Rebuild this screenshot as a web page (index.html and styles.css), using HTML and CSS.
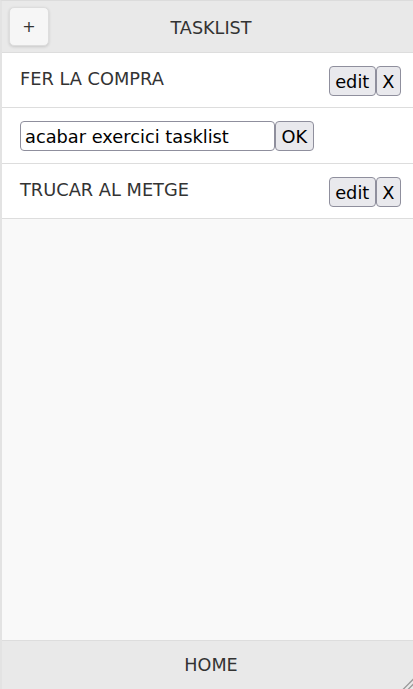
FILE: index.html
```html
<!DOCTYPE html>
<html lang="ca">
<head>
<meta charset="utf-8">
<title>Tasklist</title>
<link rel="stylesheet" href="styles.css">
</head>
<body>
<div class="app">
  <header class="bar header">
    <div class="bar-left"><button class="add-btn" type="button">+</button></div>
    <h1 class="title">TASKLIST</h1>
    <div class="bar-right"></div>
  </header>
  <ul class="tasks">
    <li class="task">
      <span class="task-text">FER LA COMPRA</span>
      <span class="actions"><button class="btn" type="button">edit</button><button class="btn" type="button">X</button></span>
    </li>
    <li class="task editing">
      <input class="task-input" type="text" value="acabar exercici tasklist"><button class="btn" type="button">OK</button>
    </li>
    <li class="task">
      <span class="task-text">TRUCAR AL METGE</span>
      <span class="actions"><button class="btn" type="button">edit</button><button class="btn" type="button">X</button></span>
    </li>
  </ul>
  <div class="content"></div>
  <footer class="bar footer">
    <h2 class="title">HOME</h2>
  </footer>
</div>
<svg class="grip" width="12" height="12" viewBox="0 0 12 12" aria-hidden="true">
  <line x1="2" y1="12.5" x2="12.5" y2="2" stroke="#9a9a9a" stroke-width="1.3"/>
  <line x1="7" y1="12.5" x2="12.5" y2="7" stroke="#9a9a9a" stroke-width="1.3"/>
</svg>
</body>
</html>
```

FILE: styles.css
```css
html, body {
  margin: 0;
  padding: 0;
  overflow: hidden;
  background: #f9f9f9;
}

body {
  font-family: "DejaVu Sans", Verdana, sans-serif;
  font-size: 17.8px;
  color: #333;
}

.app {
  box-sizing: border-box;
  width: 420px;
  height: 689px;
  border-left: 2px solid #e3e3e3;
  border-top: 1px solid #dcdcdc;
  display: flex;
  flex-direction: column;
  background: #f9f9f9;
}

.bar {
  background: #e9e9e9;
  color: #333;
}

.header {
  display: grid;
  grid-template-columns: 1fr auto 1fr;
  align-items: center;
  padding: 6px 7px;
  border-bottom: 1px solid #dddddd;
}

.title {
  margin: 0;
  font-size: 17.6px;
  font-weight: normal;
  text-align: center;
}

.header .title {
  padding-top: 2px;
}

.add-btn {
  box-sizing: border-box;
  width: 40px;
  height: 39px;
  border: 1px solid #dddddd;
  border-radius: 5px;
  background: #f6f6f6;
  box-shadow: 0 1px 3px rgba(0, 0, 0, 0.15);
  font-family: "DejaVu Sans", sans-serif;
  font-size: 16px;
  color: #333;
  padding: 0;
}

.tasks {
  list-style: none;
  margin: 0;
  padding: 0;
}

.task {
  display: flex;
  align-items: flex-start;
  background: #fff;
  border-bottom: 1px solid #dddddd;
  padding: 13px 19px 11px 18px;
  height: 30px;
}

.task.editing {
  padding-bottom: 12px;
}

.task-text {
  flex: 1;
  margin-top: 1.5px;
  line-height: normal;
}

.actions {
  display: flex;
}

.btn {
  box-sizing: border-box;
  height: 30px;
  padding: 0 5.5px;
  border: 1px solid #8f8f9d;
  border-radius: 4px;
  background: #e9e9ed;
  color: #000;
  font-family: "DejaVu Sans", sans-serif;
  font-size: 17.8px;
}

.task-input {
  box-sizing: border-box;
  width: 255px;
  height: 30px;
  padding: 0 4px;
  border: 1px solid #8f8f9d;
  border-radius: 4px;
  background: #fff;
  color: #000;
  font-family: "DejaVu Sans", sans-serif;
  font-size: 17.8px;
}

.content {
  flex: 1;
  background: #f9f9f9;
}

.footer {
  border-top: 1px solid #dddddd;
  height: 48px;
  display: flex;
  align-items: center;
  justify-content: center;
}

.grip {
  position: fixed;
  right: 0;
  bottom: 0;
}
```
